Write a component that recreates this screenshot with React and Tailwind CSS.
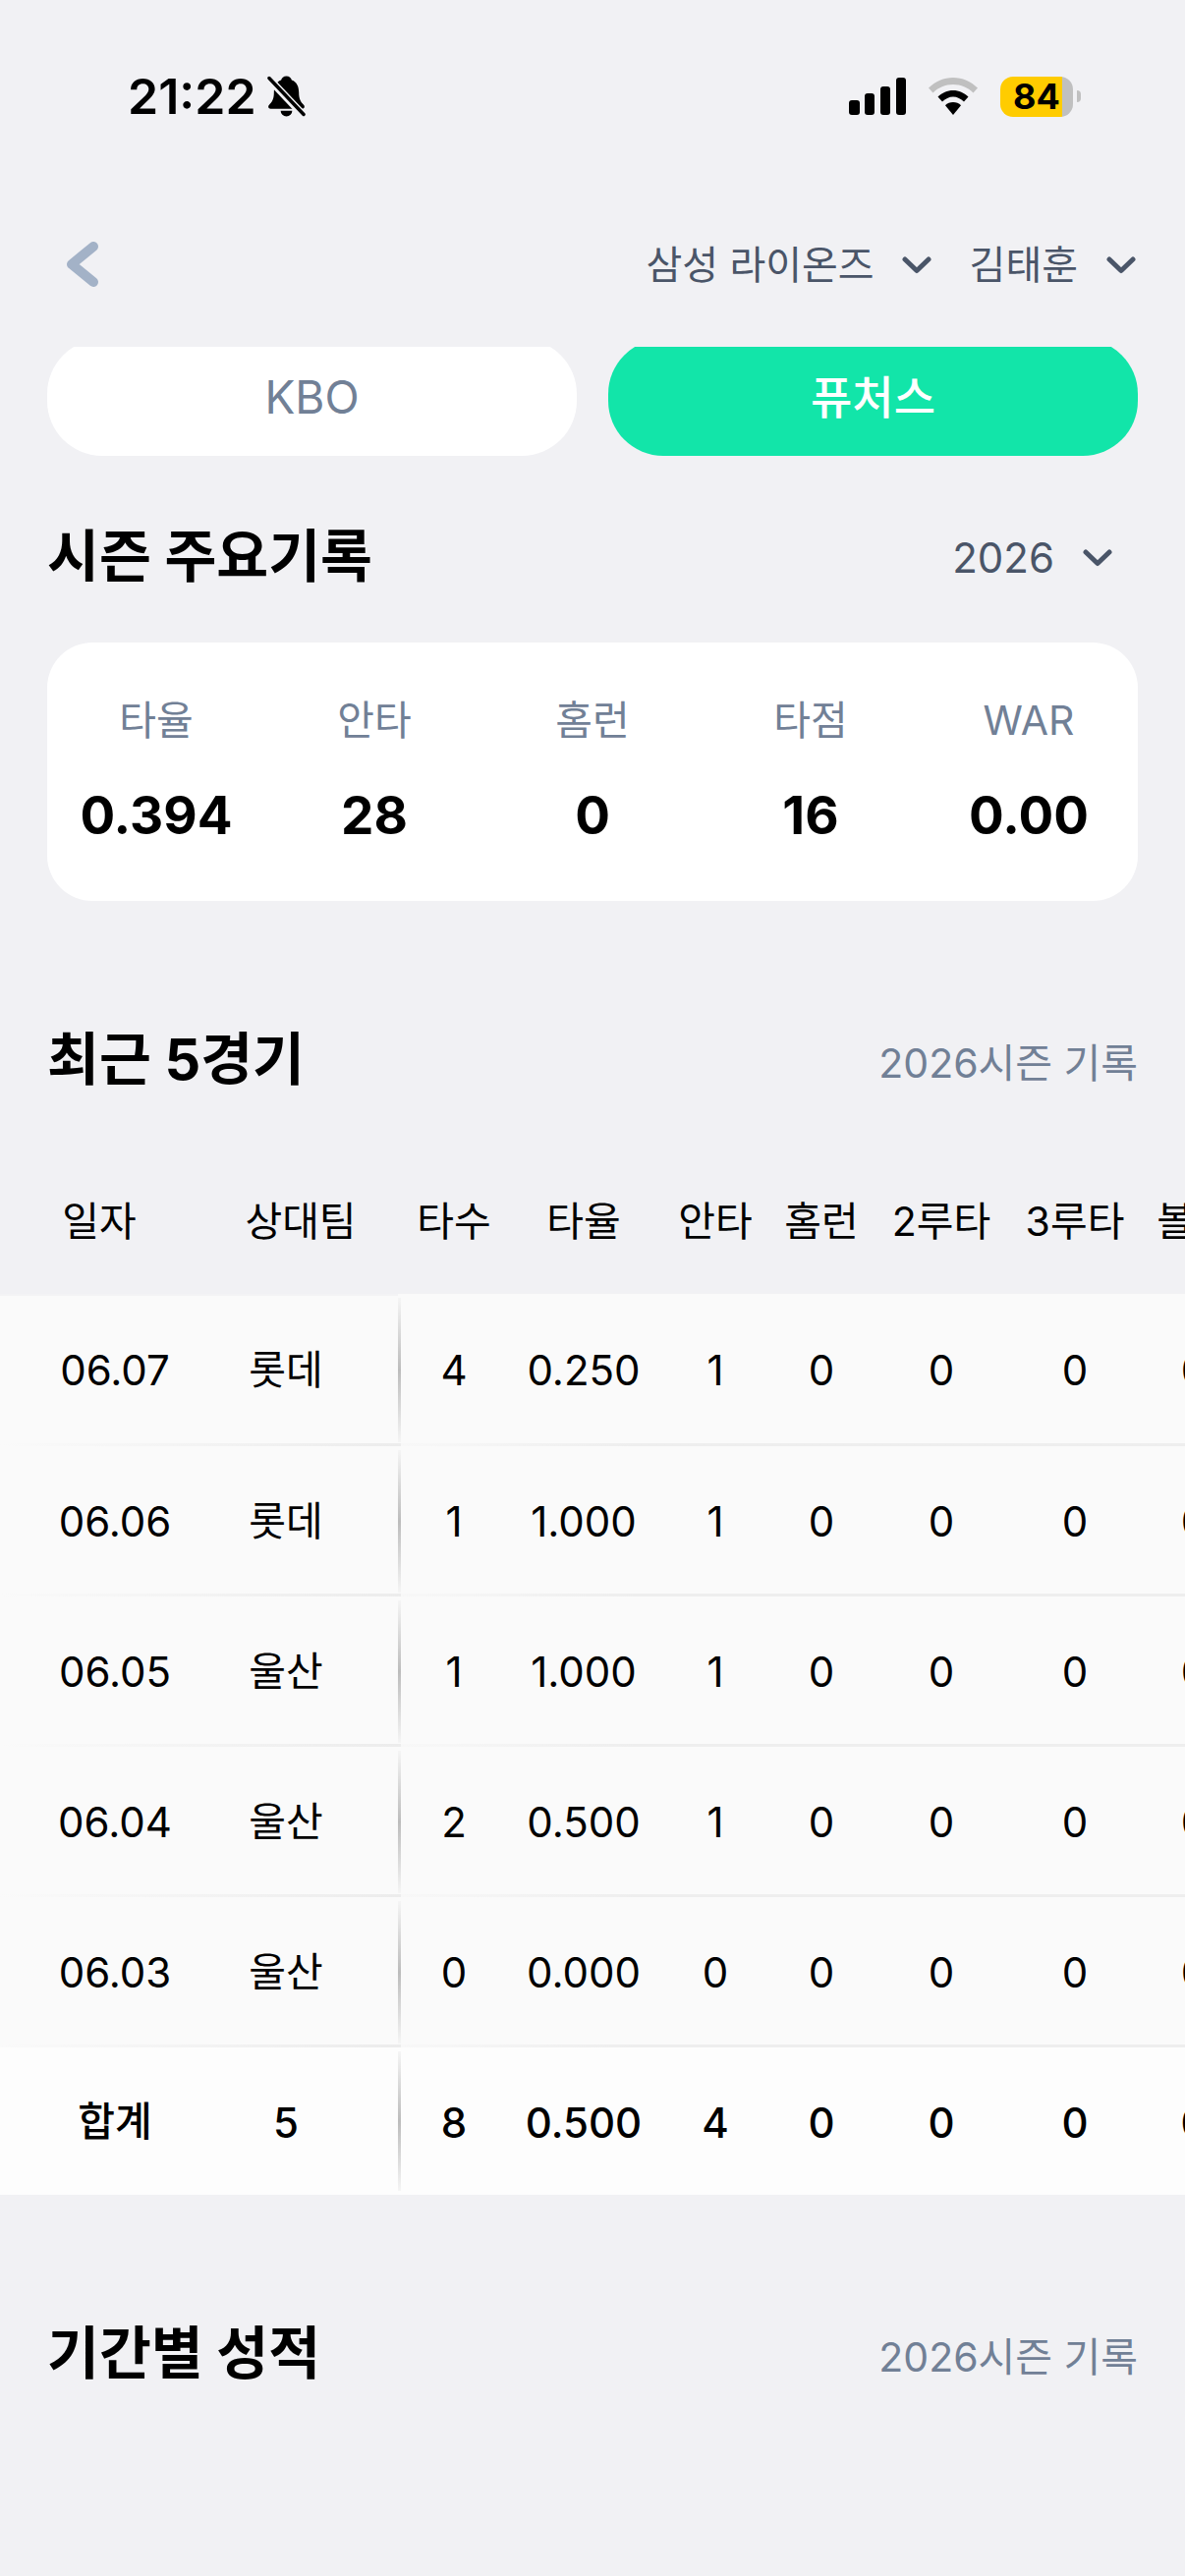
const rows = [
  ['06.07', '롯데', '4', '0.250', '1', '0', '0', '0', '0'],
  ['06.06', '롯데', '1', '1.000', '1', '0', '0', '0', '0'],
  ['06.05', '울산', '1', '1.000', '1', '0', '0', '0', '0'],
  ['06.04', '울산', '2', '0.500', '1', '0', '0', '0', '0'],
  ['06.03', '울산', '0', '0.000', '0', '0', '0', '0', '0'],
];

function Chevron({ className }) {
  return (
    <svg className={className} width="30" height="18" viewBox="0 0 30 18" fill="none">
      <path d="M3 3 L15 14.5 L27 3" stroke="#4a5568" strokeWidth="5" strokeLinecap="round" strokeLinejoin="round" />
    </svg>
  );
}

function StatusBar() {
  return (
    <div className="h-[200px] flex items-start justify-between pt-[77px] pl-[130px] pr-[106px]">
      <div className="flex items-center h-[42px] gap-[11px]">
        <span className="text-[50px] leading-[42px] font-semibold text-black">21:22</span>
        <svg width="39" height="42" viewBox="0 0 40 42">
          <path d="M20 0c-3 0-5 2-5.500 4C9 6 7 11 7 17c0 7-2 10-5 13-1.500 1.500-1 4 1.500 4h33c2.500 0 3-2.500 1.500-4-3-3-5-6-5-13 0-6-2-11-7.500-13C25 2 23 0 20 0z" fill="#000" />
          <path d="M14 36h12a6 6 0 0 1-12 0z" fill="#000" />
          <path d="M2 3 L38 41" stroke="#f1f1f4" strokeWidth="8" />
          <path d="M2 2 L38 40" stroke="#000" strokeWidth="3.500" strokeLinecap="round" />
        </svg>
      </div>
      <div className="flex items-center h-[42px]">
        <svg width="58" height="38" viewBox="0 0 58 38" className="mr-[23px]">
          <rect x="0" y="23" width="11" height="15" rx="3" fill="#000" />
          <rect x="16" y="16" width="10" height="22" rx="3" fill="#000" />
          <rect x="32" y="9" width="10" height="29" rx="3" fill="#000" />
          <rect x="48" y="0" width="10" height="38" rx="3" fill="#000" />
        </svg>
        <svg width="50" height="38" viewBox="0 0 50 38" className="mr-[23px]">
          <path d="M25 0C15.500 0 7 4 0 10.500L4.500 15.500C10 10 17 7 25 7s15 3 20.500 8.500L50 10.500C43 4 34.500 0 25 0z" fill="#c0c0c0" />
          <path d="M25 13c-6 0-11 2.500-15.500 6.500L14 24.500c3-3 7-5 11-5s8 2 11 5l4.500-5C36 15.500 31 13 25 13z" fill="#000" />
          <path d="M25 25c-3 0-6 1.200-8 3.200L25 38l8-9.800C31 26.200 28 25 25 25z" fill="#000" />
        </svg>
        <div className="flex items-center">
          <div className="w-[74px] h-[41px] rounded-[13px] pl-[13px] leading-[41px] text-[36px] font-bold text-black bg-gradient-to-r from-[#ffcc00] from-[85%] to-[#c0c0c0] to-[85%]">84</div>
          <div className="ml-[4px] w-[4px] h-[12px] rounded-r-full bg-[#c0c0c0]" />
        </div>
      </div>
    </div>
  );
}

function Nav() {
  return (
    <div className="h-[138px] flex items-center justify-between pl-[67px] pr-[50px]">
      <svg width="34" height="48" viewBox="0 0 34 48" fill="none">
        <path d="M28 6 L6 24 L28 42" stroke="#a3b2c7" strokeWidth="10" strokeLinecap="round" strokeLinejoin="round" />
      </svg>
      <div className="flex items-center text-[40px] text-[#4a5568] leading-none pt-[2px]">
        <span>삼성 라이온즈</span>
        <Chevron className="ml-[28px]" />
        <span className="ml-[39px]">김태훈</span>
        <Chevron className="ml-[29px]" />
      </div>
    </div>
  );
}

function Tabs() {
  return (
    <div className="mt-[15px] mx-[48px] h-[111px] overflow-hidden flex items-end gap-[32px]">
      <div className="flex-1 h-[119px] rounded-[56px] bg-white flex items-center justify-center text-[46px] font-normal text-[#718096]">KBO</div>
      <div className="flex-1 h-[119px] rounded-[56px] bg-[#12e5a9] flex items-center justify-center text-[46px] font-medium text-white">퓨처스</div>
    </div>
  );
}

function SectionHead({ title, right, className }) {
  return (
    <div className={`h-[100px] mx-[48px] flex items-center justify-between ${className}`}>
      <h2 className="text-[57.5px] font-bold text-black leading-none">{title}</h2>
      {right}
    </div>
  );
}

function Card() {
  const items = [['타율', '0.394'], ['안타', '28'], ['홈런', '0'], ['타점', '16'], ['WAR', '0.00']];
  return (
    <div className="mt-[37px] mx-[48px] h-[263px] bg-white rounded-[46px] flex pt-[55px]">
      {items.map(([l, v]) => (
        <div key={l} className="flex-1 flex flex-col items-center">
          <div className="h-[48px] leading-[48px] text-[41px] text-[#718096]">{l}</div>
          <div className="mt-[43px] h-[60px] leading-[60px] text-[53px] font-bold text-black">{v}</div>
        </div>
      ))}
    </div>
  );
}

const W = ['w-[108px]', 'w-[156px]', 'w-[112px]', 'w-[104px]', 'w-[140px]', 'w-[132px]', 'w-[110px]'];

function Row({ r, total, first }) {
  const bg = total ? 'bg-[#fdfdfd]' : 'bg-[#fafafa]';
  const height = total ? 'h-[150px] font-medium pt-[2px]' : first ? 'h-[155px]' : 'h-[153px]';
  return (
    <div className={`relative flex ${height} ${bg}`}>
      {!total && (
        <div className="absolute left-[408px] right-0 bottom-0 h-[3px] bg-gradient-to-r from-[#f8f8f8] to-[#eeeeee] to-[30%]" />
      )}
      <div className="w-[408px] shrink-0 flex items-center text-[42px] text-black">
        <div className={`w-[234px] text-center ${total ? 'text-[41px]' : ''}`}>{r[0]}</div>
        <div className={`w-[114px] text-center ${total ? 'text-[42px]' : 'text-[41px]'}`}>{r[1]}</div>
      </div>
      {!total && (
        <div className="absolute left-0 w-[408px] bottom-0 h-[3px] bg-gradient-to-r from-[#fafafa] to-[#ececec]" />
      )}
      {first && <div className="absolute left-0 top-0 w-[405px] h-[2px] bg-[#f3f3f5]" />}
      <div className="absolute left-[405px] top-[4px] bottom-[4px] w-[3px] bg-gradient-to-b from-[#f5f5f5] via-[#bcbcbc] to-[#f5f5f5]" />
      <div className="flex items-center text-[42px] text-black shrink-0">
        {r.slice(2).map((c, i) => (
          <div key={i} className={`${W[i]} shrink-0 text-center`}>{c}</div>
        ))}
      </div>
    </div>
  );
}

function Table() {
  const head = ['타수', '타율', '안타', '홈런', '2루타', '3루타', '볼넷'];
  return (
    <div className="overflow-hidden w-[1206px]">
      <div className="h-[188px] pt-[42px] flex items-center text-[41px] text-black">
        <div className="w-[202px] shrink-0 text-center">일자</div>
        <div className="w-[206px] shrink-0 pl-[2px] text-center">상대팀</div>
        {head.map((h, i) => (
          <div key={h} className={`${W[i]} shrink-0 text-center whitespace-nowrap`}>{h}</div>
        ))}
      </div>
      {rows.map((r, i) => <Row key={i} r={r} first={i === 0} />)}
      <Row total r={['합계', '5', '8', '0.500', '4', '0', '0', '0', '0']} />
    </div>
  );
}

export default function App() {
  const seasonNote = <span className="pt-[6px] text-[41px] text-[#718096] leading-none">2026시즌 기록</span>;
  return (
    <div className="w-[1206px] h-[2622px] overflow-hidden bg-[#f1f1f4] font-[family-name:Inter,'Noto_Sans_CJK_KR',sans-serif]">
      <StatusBar />
      <Nav />
      <Tabs />
      <SectionHead
        className="mt-[53px]"
        title="시즌 주요기록"
        right={
          <div className="flex items-center text-[42px] text-[#4a5568] leading-none mr-[26px] pt-[2px]">
            <span>2026</span>
            <Chevron className="ml-[29px]" />
          </div>
        }
      />
      <Card />
      <SectionHead className="mt-[112px]" title="최근 5경기" right={seasonNote} />
      <Table />
      <SectionHead className="mt-[112px]" title="기간별 성적" right={seasonNote} />
    </div>
  );
}
